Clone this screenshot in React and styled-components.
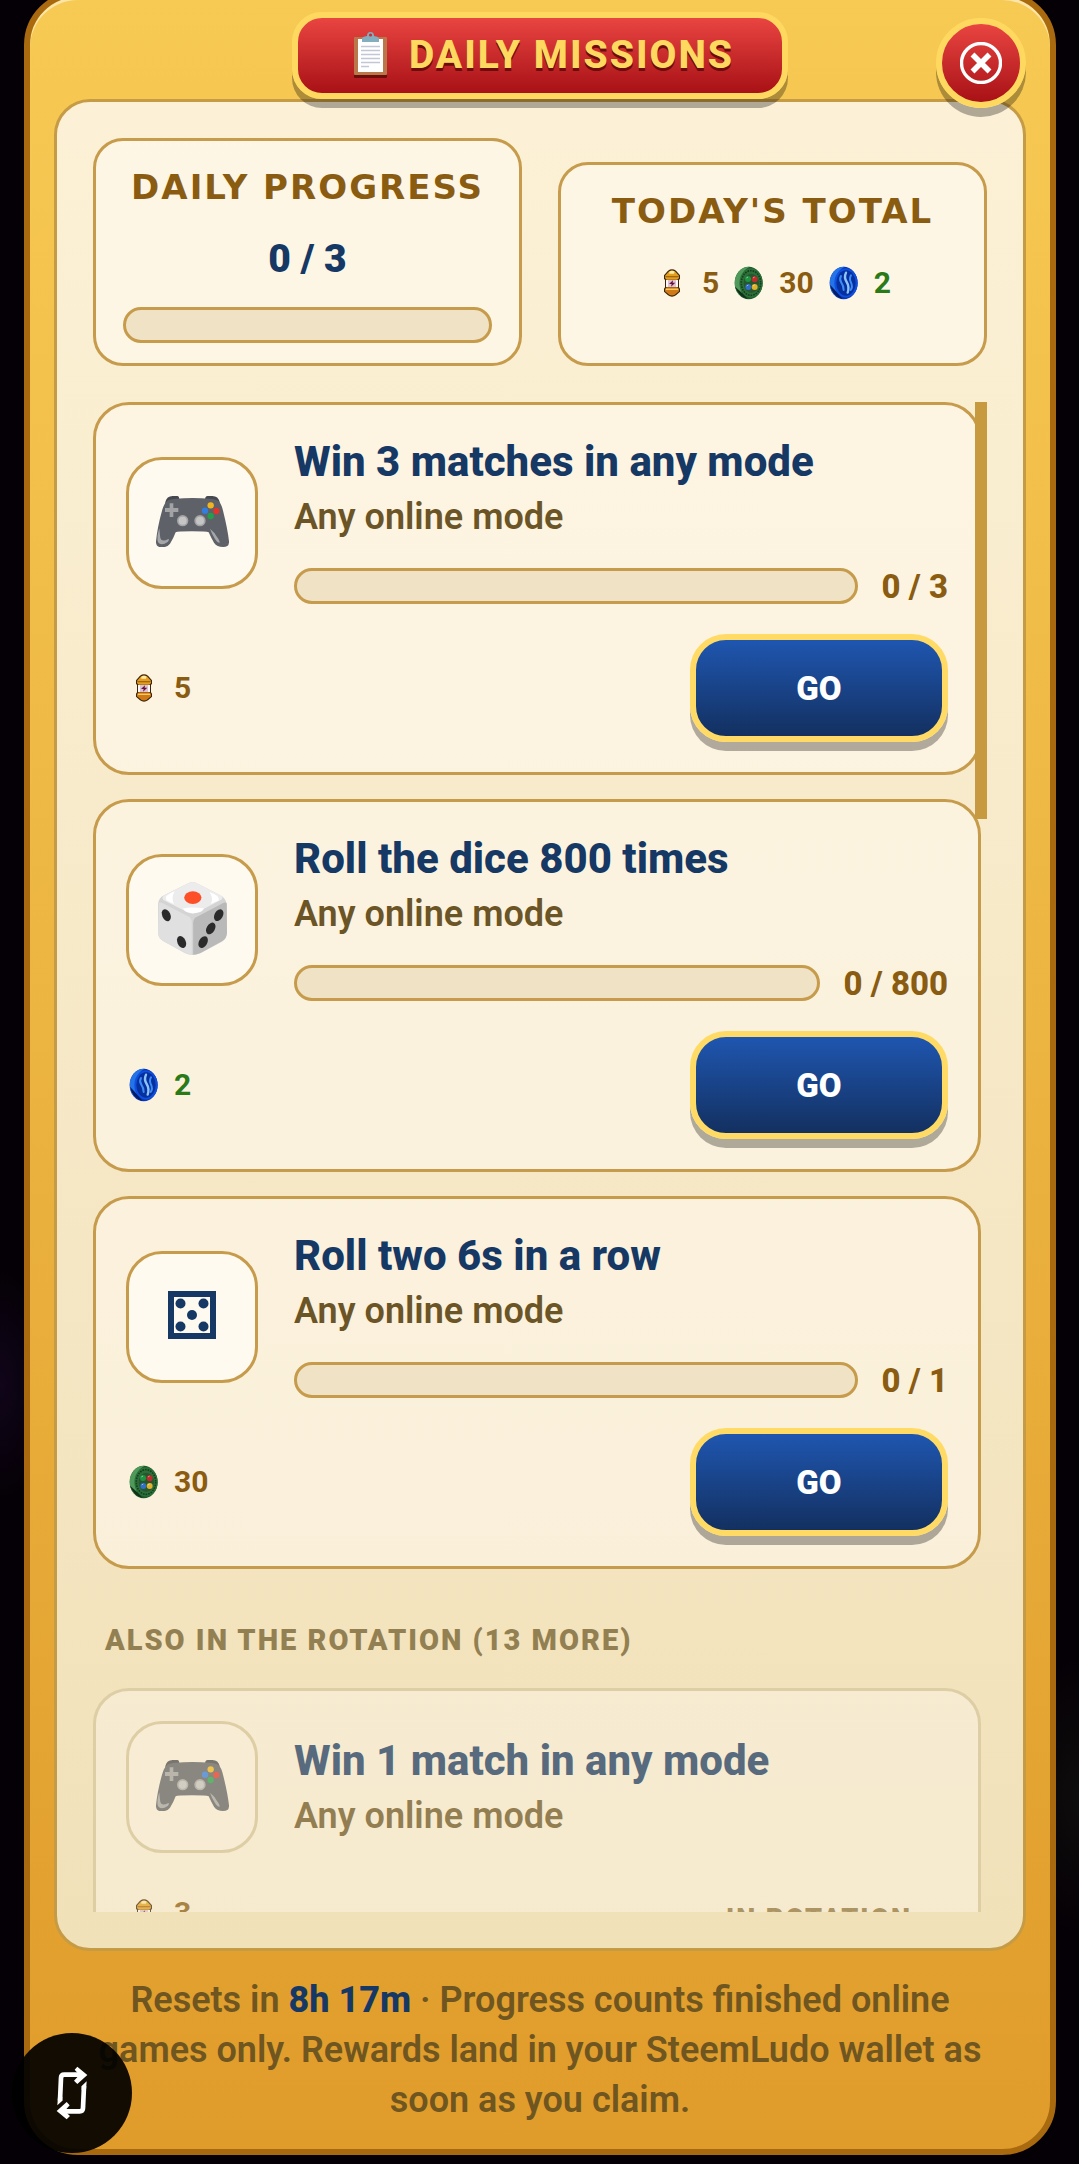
import React from "react";
import styled, { createGlobalStyle } from "styled-components";

const totals = [
  { kind: "energy", amount: 5 },
  { kind: "ludo", amount: 30 },
  { kind: "steem", amount: 2 },
];

const missions = [
  {
    id: "win3",
    icon: "gamepad",
    title: "Win 3 matches in any mode",
    mode: "Any online mode",
    done: 0,
    goal: 3,
    reward: { kind: "energy", amount: 5 },
  },
  {
    id: "roll800",
    icon: "die",
    title: "Roll the dice 800 times",
    mode: "Any online mode",
    done: 0,
    goal: 800,
    reward: { kind: "steem", amount: 2 },
  },
  {
    id: "sixes",
    icon: "pips",
    title: "Roll two 6s in a row",
    mode: "Any online mode",
    done: 0,
    goal: 1,
    reward: { kind: "ludo", amount: 30 },
  },
];

const rotation = [
  {
    id: "win1",
    icon: "gamepad",
    title: "Win 1 match in any mode",
    mode: "Any online mode",
    reward: { kind: "energy", amount: 3 },
  },
];

const ClipboardIcon = () => (
  <svg width="33" height="46" viewBox="0 0 33 46" aria-hidden="true">
    <rect x="0" y="8" width="33" height="38" rx="1" fill="#6d0c0c" />
    <rect x="0" y="5" width="33" height="38" rx="1" fill="#b9774a" />
    <rect x="4" y="7" width="25" height="33" fill="#fff" />
    <path
      d="M7 14.5h19M7 18.5h19M7 22.5h19M7 26.5h19M7 30.5h19M7 34.5h8"
      stroke="#c3c6d4"
      strokeWidth="1.3"
    />
    <path d="M8 10V7q0-2 3-2.500l2-.5q0-4 3.500-4t3.500 4l2 .5q3 .5 3 2.500v3z" fill="#82aec0" />
    <circle cx="16.500" cy="3" r="1.600" fill="#c92f2e" />
  </svg>
);

const CloseIcon = () => (
  <svg width="42" height="42" viewBox="0 0 42 42" aria-hidden="true">
    <circle cx="21" cy="21" r="19.500" fill="none" stroke="#fff" strokeWidth="3.400" />
    <path d="M12.500 12.500l17 17M29.500 12.500l-17 17" stroke="#fff" strokeWidth="5.500" />
  </svg>
);

const RotateIcon = () => (
  <svg width="32" height="54" viewBox="0 0 96 162" aria-hidden="true">
    <g fill="none" stroke="#fff" strokeWidth="14">
      <path d="M12 104L15 36Q15 26 25 26H74" />
      <path d="M84 60L81 126Q81 136 71 136H22" />
    </g>
    <path d="M64 2L94 27L64 54L54 44L70 27L56 11z" fill="#fff" />
    <path d="M32 108L2 135L32 160L42 150L26 135L41 118z" fill="#fff" />
    <path d="M4 118l15-14V92H6zM92 46L77 60v12h13z" fill="#fff" />
  </svg>
);

const GamepadIcon = () => (
  <svg width="73" height="51" viewBox="0 0 219 153" aria-hidden="true">
    <path d="M28 18Q32 0 50 0h14q6 0 6 12L28 24zM191 18Q187 0 169 0h-14q-8 0-8 12l44 12z" fill="#45484e" />
    <path
      d="M34 14Q50 6 110 6t76 8q10 6 16 34q13 52 17 88q1 17-18 17q-18 0-27-13q-7-11-16-31q-6-3-50-3t-49 3q-7 19-17 34q-8 11-25 11q-18 0-17-18q4-42 18-92q6-22 16-30z"
      fill="#5e6168"
    />
    <path d="M41 22h11v14h15v12H52v15H41V48H27V36h14z" fill="#a2a3a5" />
    <circle cx="80" cy="74" r="17" fill="#a5a5a5" />
    <circle cx="80" cy="74" r="12" fill="#c5c5c5" />
    <circle cx="132" cy="74" r="17" fill="#a5a5a5" />
    <circle cx="132" cy="74" r="12" fill="#c5c5c5" />
    <circle cx="164" cy="28" r="9.500" fill="#f0b521" />
    <circle cx="147" cy="44" r="9.500" fill="#317ee0" />
    <circle cx="181" cy="45" r="9.500" fill="#e0352b" />
    <circle cx="164" cy="60" r="9.500" fill="#239f4b" />
    <path d="M10 97q-9 28-4 42q10 12 30-2q5-7 1-8q-20 11-24-3q-2-14-3-29zM162 98q15 12 21 25q9 12 8 17q-8 0-14-11q-10-16-15-31z" fill="#a4a6a8" />
  </svg>
);

const DieIcon = () => (
  <svg width="69" height="73" viewBox="0 0 208 220" aria-hidden="true">
    <path d="M88 5q16-10 32 0l72 37q16 12 16 30v82q-1 17-14 25l-66 36q-24 10-46 0l-68-38Q2 170 0 154V66Q2 48 18 40z" fill="#d4d4d4" />
    <path d="M2 64Q6 60 14 64l78 40q10 6 10 18v97q-8 0-20-5l-68-37Q0 168 0 154z" fill="#e0e0e0" />
    <path d="M207 64q-4-4-12 0l-80 42q-9 6-9 18v95q10 0 22-5l66-36q13-8 14-25z" fill="#b9b9b9" />
    <path d="M88 5q16-10 32 0l70 36q8 6 2 12l-76 40q-12 5-24 0L16 54q-6-7 2-13z" fill="#ececec" />
    <path d="M50 28q-34 12-24 28l22 10q-9-17 2-38zM155 30q34 12 28 26l-24 10q10-16-4-36zM75 80q30-6 64 0q-8 14-32 14t-32-14z" fill="#fff" />
    <ellipse cx="105" cy="47" rx="26" ry="19" fill="#fd4f28" />
    <g fill="#2b2b2b">
      <ellipse cx="25" cy="100" rx="12.500" ry="19" transform="rotate(-24 25 100)" />
      <ellipse cx="71" cy="181" rx="12.500" ry="19" transform="rotate(-24 71 181)" />
      <ellipse cx="183" cy="100" rx="12.500" ry="19" transform="rotate(30 183 100)" />
      <ellipse cx="159" cy="140" rx="12.500" ry="19" transform="rotate(30 159 140)" />
      <ellipse cx="136" cy="181" rx="12.500" ry="19" transform="rotate(30 136 181)" />
    </g>
  </svg>
);

const PipsIcon = () => (
  <svg width="48" height="48" viewBox="0 0 48 48" fill="#163864" aria-hidden="true">
    <rect x="3" y="3" width="42" height="42" fill="none" stroke="#163864" strokeWidth="6" />
    <circle cx="12.500" cy="12.500" r="5" />
    <circle cx="35.500" cy="12.500" r="5" />
    <circle cx="24" cy="24" r="5" />
    <circle cx="12.500" cy="35.500" r="5" />
    <circle cx="35.500" cy="35.500" r="5" />
  </svg>
);

const EnergyIcon = () => (
  <svg width="36" height="34" viewBox="0 0 108 102" aria-hidden="true">
    <path d="M30 38V28L42 14Q54 6 66 14L78 28V38L75 42V64L78 68V77L66 88Q54 96 42 88L30 77V68L33 64V42z" fill="#3a250c" />
    <path d="M33 36V29L44 17Q54 10 64 17L75 29V36L70 41H38z" fill="#e3a01f" />
    <path d="M46 17q8-6 16 0l-2 6H46z" fill="#ffe9a0" />
    <path d="M34 32h40" stroke="#a8640f" strokeWidth="4" />
    <path d="M36 42h36v21H36z" fill="#dcc3d4" />
    <path d="M36 42h6v21h-6zM66 42h6v21h-6z" fill="#fff6fa" />
    <path d="M57 43L45 54h8l-2 8l13-12h-8z" fill="#6b1238" />
    <path d="M33 69l5-5h32l5 5v7L64 85Q54 92 44 85L33 76z" fill="#cf7a16" />
    <path d="M36 70h36" stroke="#ffca5c" strokeWidth="4" />
  </svg>
);

const LudoIcon = () => (
  <svg width="36" height="34" viewBox="0 0 108 102" aria-hidden="true">
    <ellipse cx="53" cy="51" rx="42" ry="49" fill="#1d5a2c" />
    <path d="M12 40Q22 2 56 2Q36 12 30 34T36 92Q8 82 12 40z" fill="#4f9a5a" />
    <path d="M12 62Q22 92 50 99L34 82z" fill="#0f3117" />
    <ellipse cx="60" cy="51" rx="35" ry="44" fill="#2c7139" />
    <ellipse cx="60" cy="51" rx="29" ry="37" fill="none" stroke="#163f1f" strokeWidth="5" strokeDasharray="5 3" />
    <ellipse cx="61" cy="52" rx="23" ry="29" fill="#28562f" />
    <circle cx="51" cy="39" r="9" fill="#1f9440" />
    <circle cx="71" cy="40" r="9" fill="#c02b2b" />
    <circle cx="52" cy="63" r="9" fill="#2f6fc4" />
    <circle cx="71" cy="63" r="9" fill="#e0b12a" />
    <path d="M46 36l5-3M66 36l5-3M47 60l5-3M66 60l5-3" stroke="#ffffff" strokeOpacity="0.5" strokeWidth="3" />
  </svg>
);

const SteemIcon = () => (
  <svg width="36" height="34" viewBox="0 0 108 102" aria-hidden="true">
    <ellipse cx="53" cy="51" rx="42" ry="49" fill="#0a34b0" />
    <path d="M12 40Q22 2 56 2Q36 12 30 34T36 92Q8 82 12 40z" fill="#2474e8" />
    <path d="M12 56Q18 90 50 99L30 76z" fill="#041c66" />
    <ellipse cx="60" cy="51" rx="35" ry="44" fill="#0d4fe0" />
    <ellipse cx="60" cy="51" rx="29" ry="38" fill="#07309c" />
    <g fill="none" strokeLinecap="round">
      <path d="M45 30q-6 10 1 20t7 22" stroke="#3d8cf5" strokeWidth="6" />
      <path d="M60 20q-7 14 2 28t3 32" stroke="#8cc4ff" strokeWidth="7" />
      <path d="M75 28q-6 10 0 22t-1 22" stroke="#3d8cf5" strokeWidth="6" />
    </g>
  </svg>
);

const missionIcons = { gamepad: GamepadIcon, die: DieIcon, pips: PipsIcon };
const rewardIcons = { energy: EnergyIcon, ludo: LudoIcon, steem: SteemIcon };

const Reward = ({ kind, amount }) => {
  const Icon = rewardIcons[kind];
  return (
    <RewardItem>
      <Icon />
      <Amount $green={kind === "steem"}>{amount}</Amount>
    </RewardItem>
  );
};

const Progress = ({ done, goal, label }) => (
  <Bar role="progressbar" aria-label={label} aria-valuenow={done} aria-valuemin={0} aria-valuemax={goal}>
    <Fill style={{ width: `${(done / goal) * 100}%` }} />
  </Bar>
);

const Mission = ({ mission, upcoming }) => {
  const Icon = missionIcons[mission.icon];
  return (
    <MissionCard $faded={upcoming}>
      <MissionTop>
        <Tile $faded={upcoming}>
          <Icon />
        </Tile>
        <Info>
          <MissionTitle>{mission.title}</MissionTitle>
          <Mode>{mission.mode}</Mode>
          {!upcoming && (
            <ProgressRow>
              <Progress done={mission.done} goal={mission.goal} label={mission.title} />
              <Count>
                {mission.done} / {mission.goal}
              </Count>
            </ProgressRow>
          )}
        </Info>
      </MissionTop>
      <MissionBottom>
        <Reward {...mission.reward} />
        {upcoming ? <Status>IN ROTATION</Status> : <GoButton type="button">GO</GoButton>}
      </MissionBottom>
    </MissionCard>
  );
};

const App = () => {
  return (
    <Page>
      <GlobalStyle />
      <Panel>
        <Header>
          <Ribbon>
            <ClipboardIcon />
            DAILY MISSIONS
          </Ribbon>
          <CloseButton type="button" aria-label="Close">
            <CloseIcon />
          </CloseButton>
        </Header>

        <Body>
          <Summary>
            <SummaryCard>
              <SummaryTitle>DAILY PROGRESS</SummaryTitle>
              <SummaryValue>0 / 3</SummaryValue>
              <Progress done={0} goal={3} label="Daily progress" />
            </SummaryCard>
            <SummaryCard $lowered>
              <SummaryTitle>TODAY'S TOTAL</SummaryTitle>
              <Totals>
                {totals.map((item) => (
                  <Reward key={item.kind} {...item} />
                ))}
              </Totals>
            </SummaryCard>
          </Summary>

          <ListWrap>
            <List>
              {missions.map((mission) => (
                <Mission key={mission.id} mission={mission} />
              ))}
              <SectionTitle>ALSO IN THE ROTATION (13 MORE)</SectionTitle>
              {rotation.map((mission) => (
                <Mission key={mission.id} mission={mission} upcoming />
              ))}
            </List>
            <ScrollThumb />
          </ListWrap>
        </Body>

        <Footer>
          Resets in <strong>8h 17m</strong> · Progress counts finished online
          games only. Rewards land in your SteemLudo wallet as soon as you
          claim.
        </Footer>
      </Panel>
      <RotateButton type="button" aria-label="Rotate screen">
        <RotateIcon />
      </RotateButton>
    </Page>
  );
};

export default App;

const GlobalStyle = createGlobalStyle`
  * {
    box-sizing: border-box;
  }

  body {
    margin: 0;
    background-color: #050005;
    font-family: Roboto, sans-serif;
  }

  h1, h2, h3, p {
    margin: 0;
  }

  svg {
    display: block;
    flex-shrink: 0;
  }
`;

const Page = styled.main`
  height: 100vh;
  padding: 0 23px 0 24px;
  overflow: hidden;
  background:
    radial-gradient(ellipse 50px 120px at 0 64%, #10051a, transparent),
    radial-gradient(ellipse 60px 140px at 100% 83%, #0e0d0d, transparent),
    #050005;
`;

const Panel = styled.div`
  display: flex;
  flex-direction: column;
  height: 100vh;
  margin-top: -9px;
  padding: 0 24px;
  border: 6px solid #a8690f;
  border-radius: 54px;
  background: linear-gradient(#f7ca54, #e09c2b);
  box-shadow: inset 0 3px 0 rgba(255, 255, 255, 0.5);
`;

const Header = styled.header`
  display: grid;
  grid-template-columns: 1fr auto 1fr;
  flex-shrink: 0;
  height: 102px;
  padding-top: 15px;
  z-index: 1;
`;

const Ribbon = styled.h1`
  grid-column: 2;
  display: flex;
  align-items: center;
  gap: 22px;
  height: 87px;
  padding: 0 48px 2px 56px;
  border: 6px solid #ffd95f;
  border-radius: 30px;
  background: linear-gradient(#e94541, #a81116);
  box-shadow: 0 9px 0 rgba(0, 0, 0, 0.3);
  color: #ffd95f;
  font-size: 39px;
  font-weight: 800;
  letter-spacing: 2px;
  text-shadow: 0 3px 0 #6d0c0c;
`;

const CloseButton = styled.button`
  display: flex;
  align-items: center;
  justify-content: center;
  justify-self: end;
  width: 90px;
  height: 90px;
  margin-top: 6px;
  padding: 0;
  border: 6px solid #ffd95f;
  border-radius: 50%;
  background: linear-gradient(#e94541, #a81116);
  box-shadow: 0 9px 0 rgba(0, 0, 0, 0.3);
  cursor: pointer;
`;

const Body = styled.section`
  display: flex;
  flex-direction: column;
  flex: 1;
  gap: 36px;
  min-height: 0;
  padding: 36px;
  border: 3px solid #c69b45;
  border-radius: 36px;
  background: linear-gradient(#fcf1d6, #f1e1b9);
`;

const Summary = styled.div`
  display: grid;
  grid-template-columns: 1fr 1fr;
  gap: 36px;
`;

const SummaryCard = styled.div`
  display: flex;
  flex-direction: column;
  gap: 18px;
  min-width: 0;
  margin-top: ${(props) => (props.$lowered ? "24px" : "0")};
  padding: 22px 27px 20px;
  border: 3px solid #c69b4b;
  border-radius: 30px;
  background-color: rgba(255, 250, 240, 0.6);
  text-align: center;
`;

const SummaryTitle = styled.h2`
  color: #8a5c12;
  font-family: "DejaVu Sans", sans-serif;
  font-size: 34px;
  font-weight: 700;
  line-height: 48px;
  letter-spacing: 2px;
  white-space: nowrap;
`;

const SummaryValue = styled.div`
  color: #163864;
  font-size: 39px;
  font-weight: 900;
  line-height: 60px;
`;

const Totals = styled.div`
  display: flex;
  align-items: center;
  justify-content: center;
  gap: 12px;
  height: 60px;
`;

const RewardItem = styled.div`
  display: flex;
  align-items: center;
  gap: 12px;
`;

const Amount = styled.span`
  color: ${(props) => (props.$green ? "#2a7a18" : "#8a5c12")};
  font-size: 30px;
  font-weight: 700;
  line-height: 36px;
`;

const Bar = styled.div`
  flex-grow: 1;
  height: 36px;
  border: 3px solid #c69b4b;
  border-radius: 18px;
  background-color: #efe2c5;
  overflow: hidden;
`;

const Fill = styled.div`
  height: 100%;
  background-color: #2a7a18;
`;

const ListWrap = styled.div`
  position: relative;
  display: flex;
  flex: 1;
  min-height: 0;
`;

const List = styled.div`
  flex: 1;
  display: flex;
  flex-direction: column;
  gap: 24px;
  padding-right: 6px;
  overflow-y: auto;
  scrollbar-width: none;
`;

const ScrollThumb = styled.div`
  position: absolute;
  top: 0;
  right: 0;
  width: 12px;
  height: 417px;
  background-color: #c89a40;
`;

const MissionCard = styled.article`
  display: flex;
  flex-direction: column;
  flex-shrink: 0;
  gap: 24px;
  padding: 30px;
  border: 3px solid ${(props) => (props.$faded ? "#d6c69c" : "#c69b4b")};
  border-radius: 36px;
  background-color: rgba(255, 250, 240, 0.55);
  opacity: ${(props) => (props.$faded ? 0.7 : 1)};
`;

const MissionTop = styled.div`
  display: flex;
  align-items: center;
  gap: 36px;
`;

const Tile = styled.div`
  display: flex;
  align-items: center;
  justify-content: center;
  flex-shrink: 0;
  width: 132px;
  height: 132px;
  padding-bottom: 3px;
  border: 3px solid ${(props) => (props.$faded ? "#d6c69c" : "#c69b4b")};
  border-radius: 36px;
  background-color: ${(props) => (props.$faded ? "#fbf1df" : "#fffaef")};
`;

const Info = styled.div`
  flex: 1;
  min-width: 0;
`;

const MissionTitle = styled.h3`
  color: #163864;
  font-size: 42px;
  font-weight: 800;
  line-height: 54px;
`;

const Mode = styled.p`
  margin-top: 4px;
  color: #6b5426;
  font-size: 36px;
  font-weight: 600;
  line-height: 48px;
`;

const ProgressRow = styled.div`
  display: flex;
  align-items: center;
  gap: 24px;
  height: 48px;
  margin-top: 21px;
`;

const Count = styled.span`
  color: #8a5c12;
  font-size: 33px;
  font-weight: 800;
`;

const MissionBottom = styled.div`
  display: flex;
  align-items: center;
  justify-content: space-between;
`;

const GoButton = styled.button`
  width: 258px;
  height: 108px;
  border: 6px solid #ffdb66;
  border-radius: 36px;
  background: linear-gradient(#1f56b0, #133060);
  box-shadow: 0 9px 0 rgba(0, 0, 0, 0.3);
  color: #fff;
  font-family: inherit;
  font-size: 33px;
  font-weight: 900;
  cursor: pointer;
`;

const Status = styled.span`
  width: 258px;
  height: 72px;
  padding-top: 12px;
  color: #8f7440;
  font-size: 27px;
  font-weight: 900;
  line-height: 60px;
  letter-spacing: 2px;
  text-align: center;
`;

const SectionTitle = styled.h2`
  padding: 29px 12px 6px;
  color: #938052;
  font-size: 29px;
  font-weight: 900;
  line-height: 36px;
  letter-spacing: 2px;
`;

const Footer = styled.footer`
  flex-shrink: 0;
  padding: 24px 36px;
  color: #6f5620;
  font-size: 36px;
  font-weight: 600;
  line-height: 50px;
  text-align: center;

  strong {
    color: #163864;
    font-weight: 800;
  }
`;

const RotateButton = styled.button`
  position: fixed;
  left: 12px;
  bottom: 11px;
  z-index: 2;
  display: flex;
  align-items: center;
  justify-content: center;
  width: 120px;
  height: 120px;
  padding: 0;
  border: none;
  border-radius: 50%;
  background-color: rgba(0, 0, 0, 0.92);
  cursor: pointer;
`;
